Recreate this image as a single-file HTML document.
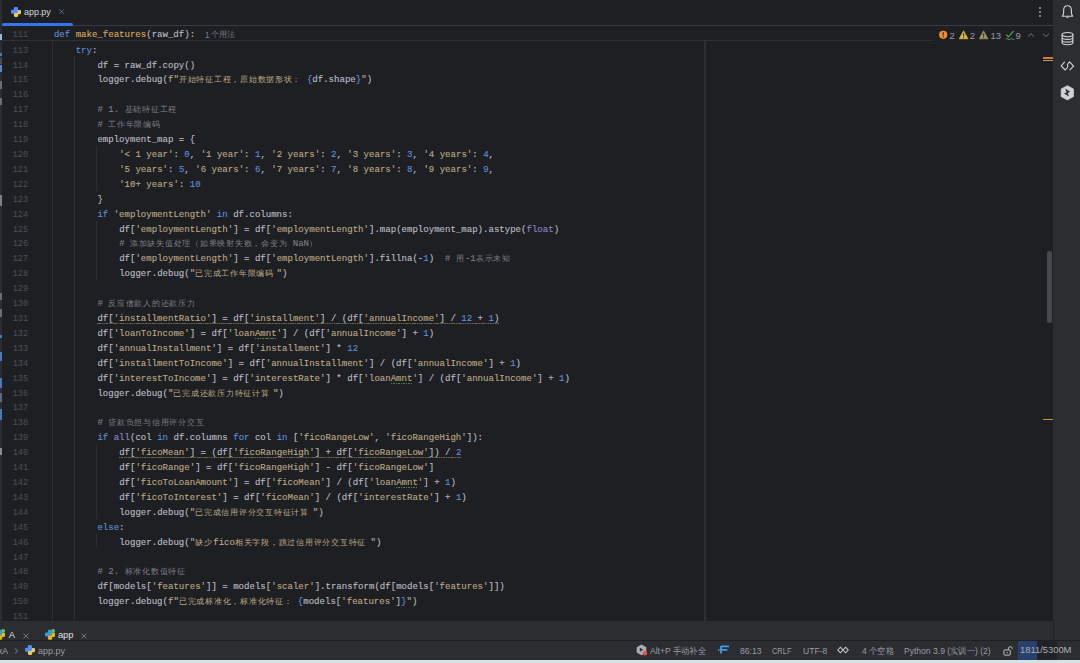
<!DOCTYPE html>
<html><head><meta charset="utf-8">
<style>
*{box-sizing:border-box}
html,body{margin:0;padding:0}
body{width:1080px;height:663px;overflow:hidden;position:relative;background:#1e1f22;font-family:"Liberation Sans",sans-serif}
.abs{position:absolute}
.ln{position:absolute;left:0;width:28.2px;text-align:right;font-family:"Liberation Mono",monospace;font-size:8.6px;line-height:14.91px;height:14.91px;color:#4b5059;white-space:pre}
.cl{position:absolute;left:53.9px;font-family:"Liberation Mono",monospace;font-size:9.05px;line-height:14.91px;height:14.91px;white-space:pre;color:#bcbec4;-webkit-text-stroke:0.12px currentColor}
.zh{-webkit-text-stroke:0;display:inline-block;vertical-align:baseline;white-space:nowrap;font-size:8.3px;letter-spacing:0.74px;font-family:"Liberation Serif",serif}
.d{color:#bcbec4}.k{color:#5f8ed8}.f{color:#dda85e}.s{color:#bba98a}.n{color:#5f8ed8}.c{color:#7a7e85}.b{color:#8a88c8}.br{color:#5f8ed8}
.hint{position:absolute;font-family:"Liberation Sans",sans-serif;font-size:8px;line-height:14.91px;color:#757880;white-space:nowrap}
.wav{position:absolute;height:1.3px;background:repeating-linear-gradient(90deg,#66634e 0 1.5px,#3a3930 1.5px 2.3px)}
.typo{position:absolute;height:1.4px;background:repeating-linear-gradient(90deg,#4f7d50 0 1.5px,transparent 1.5px 2.5px)}
.guide{position:absolute;width:1.2px;background:#2c2e32}
.wtxt{top:29.8px;font-size:9.5px;line-height:12px;color:#979ca4;font-family:"Liberation Sans",sans-serif}
.tabt{top:629px;font-size:9.3px;line-height:12px;color:#dfe1e5}
.stt{top:644.5px;font-size:9.3px;line-height:12px;color:#9a9da4;white-space:nowrap;transform-origin:0 50%;transform:scaleX(0.92)}
</style></head><body>
<!-- left strip -->
<div class="abs" style="left:0;top:0;width:2px;height:641px;background:#2b2d30"></div>
<!-- tab bar -->
<div class="abs" style="left:2px;top:25px;width:1051px;height:1px;background:#393b40"></div>
<div class="abs" style="left:2px;top:23px;width:70.5px;height:3px;border-radius:1.5px;background:#3574f0"></div>
<svg class="abs" style="left:10.9px;top:6.9px" width="10.2" height="10" viewBox="0 0 10.2 10">
<rect x="3.1" y="2.9" width="7" height="4.3" rx="1.3" fill="#f0c75a"/>
<rect x="2.9" y="5.6" width="4.3" height="4.3" rx="1.3" fill="#f0c75a"/>
<rect x="2.9" y="0" width="4.1" height="4.3" rx="1.3" fill="#4f8ef7"/>
<rect x="0" y="2.7" width="6.8" height="3.4" rx="1.2" fill="#4f8ef7"/>
<rect x="0" y="4.5" width="3.4" height="2.3" rx="1.1" fill="#4f8ef7"/>
</svg>
<div class="abs" style="left:24.4px;top:6px;font-size:9.6px;line-height:12px;color:#d5d7dc;transform-origin:0 50%;transform:scaleX(0.93)">app.py</div>
<svg class="abs" style="left:59.3px;top:9.2px" width="5.2" height="5.2" viewBox="0 0 6 6"><path d="M0.5 0.5L5.5 5.5M5.5 0.5L0.5 5.5" stroke="#80848b" stroke-width="0.9"/></svg>
<!-- kebab -->
<div class="abs" style="left:1039px;top:7px;width:2px;height:2px;border-radius:1px;background:#9da0a8"></div>
<div class="abs" style="left:1039px;top:11px;width:2px;height:2px;border-radius:1px;background:#9da0a8"></div>
<div class="abs" style="left:1039px;top:15px;width:2px;height:2px;border-radius:1px;background:#9da0a8"></div>

<!-- sticky header separator -->
<div class="abs" style="left:2px;top:40px;width:931px;height:1px;background:#2e3035"></div>

<!-- indent guides -->
<div class="guide" style="left:51.6px;top:41px;height:580px"></div>
<div class="guide" style="left:74.3px;top:56px;height:565px"></div>
<div class="guide" style="left:96.1px;top:146.0px;height:44.7px"></div>
<div class="guide" style="left:96.1px;top:220.5px;height:59.6px"></div>
<div class="guide" style="left:96.1px;top:444.2px;height:74.5px"></div>
<div class="guide" style="left:96.1px;top:533.6px;height:14.9px"></div>

<!-- right margin -->
<div class="abs" style="left:704.4px;top:41px;width:1.2px;height:580px;background:#2d2f33"></div>

<div class="ln" style="top:27.93px">111</div><div class="cl" style="top:27.93px"><span class="k">def</span><span class="d"> </span><span class="f">make_features</span><span class="d">(raw_df):</span></div><div class="hint" style="left:204.8px;top:27.73px;font-size:9.2px">1</div><div class="hint" style="left:211.3px;top:28.33px">个用法</div>
<div class="ln" style="top:43.63px">113</div>
<div class="cl" style="top:43.63px"><span class="d"> </span><span class="d"> </span><span class="d"> </span><span class="d"> </span><span class="k">try</span><span class="d">:</span></div>
<div class="ln" style="top:58.54px">114</div>
<div class="cl" style="top:58.54px"><span class="d"> </span><span class="d"> </span><span class="d"> </span><span class="d"> </span><span class="d"> </span><span class="d"> </span><span class="d"> </span><span class="d"> </span><span class="d">df</span><span class="d"> </span><span class="d">=</span><span class="d"> </span><span class="d">raw_df</span><span class="d">.</span><span class="d">copy</span><span class="d">(</span><span class="d">)</span></div>
<div class="ln" style="top:73.45px">115</div>
<div class="cl" style="top:73.45px"><span class="d"> </span><span class="d"> </span><span class="d"> </span><span class="d"> </span><span class="d"> </span><span class="d"> </span><span class="d"> </span><span class="d"> </span><span class="d">logger</span><span class="d">.</span><span class="d">debug</span><span class="d">(</span><span class="s">f&quot;</span><span class="s"><span class="zh" style="width:128.02px">开始特征工程，原始数据形状：</span></span><span class="br">{</span><span class="d">df</span><span class="d">.</span><span class="d">shape</span><span class="br">}</span><span class="s">&quot;</span><span class="d">)</span></div>
<div class="ln" style="top:88.36px">116</div>
<div class="ln" style="top:103.27px">117</div>
<div class="cl" style="top:103.27px"><span class="d"> </span><span class="d"> </span><span class="d"> </span><span class="d"> </span><span class="d"> </span><span class="d"> </span><span class="d"> </span><span class="d"> </span><span class="c"># 1. <span class="zh" style="width:54.24px">基础特征工程</span></span></div>
<div class="ln" style="top:118.18px">118</div>
<div class="cl" style="top:118.18px"><span class="d"> </span><span class="d"> </span><span class="d"> </span><span class="d"> </span><span class="d"> </span><span class="d"> </span><span class="d"> </span><span class="d"> </span><span class="c"># <span class="zh" style="width:54.24px">工作年限编码</span></span></div>
<div class="ln" style="top:133.09px">119</div>
<div class="cl" style="top:133.09px"><span class="d"> </span><span class="d"> </span><span class="d"> </span><span class="d"> </span><span class="d"> </span><span class="d"> </span><span class="d"> </span><span class="d"> </span><span class="d">employment_map</span><span class="d"> </span><span class="d">=</span><span class="d"> </span><span class="d">{</span></div>
<div class="ln" style="top:148.00px">120</div>
<div class="cl" style="top:148.00px"><span class="d"> </span><span class="d"> </span><span class="d"> </span><span class="d"> </span><span class="d"> </span><span class="d"> </span><span class="d"> </span><span class="d"> </span><span class="d"> </span><span class="d"> </span><span class="d"> </span><span class="d"> </span><span class="s">&#x27;&lt; 1 year&#x27;</span><span class="d">:</span><span class="d"> </span><span class="n">0</span><span class="d">,</span><span class="d"> </span><span class="s">&#x27;1 year&#x27;</span><span class="d">:</span><span class="d"> </span><span class="n">1</span><span class="d">,</span><span class="d"> </span><span class="s">&#x27;2 years&#x27;</span><span class="d">:</span><span class="d"> </span><span class="n">2</span><span class="d">,</span><span class="d"> </span><span class="s">&#x27;3 years&#x27;</span><span class="d">:</span><span class="d"> </span><span class="n">3</span><span class="d">,</span><span class="d"> </span><span class="s">&#x27;4 years&#x27;</span><span class="d">:</span><span class="d"> </span><span class="n">4</span><span class="d">,</span></div>
<div class="ln" style="top:162.91px">121</div>
<div class="cl" style="top:162.91px"><span class="d"> </span><span class="d"> </span><span class="d"> </span><span class="d"> </span><span class="d"> </span><span class="d"> </span><span class="d"> </span><span class="d"> </span><span class="d"> </span><span class="d"> </span><span class="d"> </span><span class="d"> </span><span class="s">&#x27;5 years&#x27;</span><span class="d">:</span><span class="d"> </span><span class="n">5</span><span class="d">,</span><span class="d"> </span><span class="s">&#x27;6 years&#x27;</span><span class="d">:</span><span class="d"> </span><span class="n">6</span><span class="d">,</span><span class="d"> </span><span class="s">&#x27;7 years&#x27;</span><span class="d">:</span><span class="d"> </span><span class="n">7</span><span class="d">,</span><span class="d"> </span><span class="s">&#x27;8 years&#x27;</span><span class="d">:</span><span class="d"> </span><span class="n">8</span><span class="d">,</span><span class="d"> </span><span class="s">&#x27;9 years&#x27;</span><span class="d">:</span><span class="d"> </span><span class="n">9</span><span class="d">,</span></div>
<div class="ln" style="top:177.82px">122</div>
<div class="cl" style="top:177.82px"><span class="d"> </span><span class="d"> </span><span class="d"> </span><span class="d"> </span><span class="d"> </span><span class="d"> </span><span class="d"> </span><span class="d"> </span><span class="d"> </span><span class="d"> </span><span class="d"> </span><span class="d"> </span><span class="s">&#x27;10+ years&#x27;</span><span class="d">:</span><span class="d"> </span><span class="n">10</span></div>
<div class="ln" style="top:192.73px">123</div>
<div class="cl" style="top:192.73px"><span class="d"> </span><span class="d"> </span><span class="d"> </span><span class="d"> </span><span class="d"> </span><span class="d"> </span><span class="d"> </span><span class="d"> </span><span class="d">}</span></div>
<div class="ln" style="top:207.64px">124</div>
<div class="cl" style="top:207.64px"><span class="d"> </span><span class="d"> </span><span class="d"> </span><span class="d"> </span><span class="d"> </span><span class="d"> </span><span class="d"> </span><span class="d"> </span><span class="k">if</span><span class="d"> </span><span class="s">&#x27;employmentLength&#x27;</span><span class="d"> </span><span class="k">in</span><span class="d"> </span><span class="d">df</span><span class="d">.</span><span class="d">columns</span><span class="d">:</span></div>
<div class="ln" style="top:222.55px">125</div>
<div class="cl" style="top:222.55px"><span class="d"> </span><span class="d"> </span><span class="d"> </span><span class="d"> </span><span class="d"> </span><span class="d"> </span><span class="d"> </span><span class="d"> </span><span class="d"> </span><span class="d"> </span><span class="d"> </span><span class="d"> </span><span class="d">df</span><span class="d">[</span><span class="s">&#x27;employmentLength&#x27;</span><span class="d">]</span><span class="d"> </span><span class="d">=</span><span class="d"> </span><span class="d">df</span><span class="d">[</span><span class="s">&#x27;employmentLength&#x27;</span><span class="d">]</span><span class="d">.</span><span class="d">map</span><span class="d">(</span><span class="d">employment_map</span><span class="d">)</span><span class="d">.</span><span class="d">astype</span><span class="d">(</span><span class="b">float</span><span class="d">)</span></div>
<div class="ln" style="top:237.46px">126</div>
<div class="cl" style="top:237.46px"><span class="d"> </span><span class="d"> </span><span class="d"> </span><span class="d"> </span><span class="d"> </span><span class="d"> </span><span class="d"> </span><span class="d"> </span><span class="d"> </span><span class="d"> </span><span class="d"> </span><span class="d"> </span><span class="c"># <span class="zh" style="width:162.72px">添加缺失值处理（如果映射失败，会变为</span>NaN<span class="zh" style="width:9.04px">）</span></span></div>
<div class="ln" style="top:252.37px">127</div>
<div class="cl" style="top:252.37px"><span class="d"> </span><span class="d"> </span><span class="d"> </span><span class="d"> </span><span class="d"> </span><span class="d"> </span><span class="d"> </span><span class="d"> </span><span class="d"> </span><span class="d"> </span><span class="d"> </span><span class="d"> </span><span class="d">df</span><span class="d">[</span><span class="s">&#x27;employmentLength&#x27;</span><span class="d">]</span><span class="d"> </span><span class="d">=</span><span class="d"> </span><span class="d">df</span><span class="d">[</span><span class="s">&#x27;employmentLength&#x27;</span><span class="d">]</span><span class="d">.</span><span class="d">fillna</span><span class="d">(</span><span class="d">-</span><span class="n">1</span><span class="d">)</span><span class="d"> </span><span class="d"> </span><span class="c"># <span class="zh" style="width:9.04px">用</span>-1<span class="zh" style="width:36.16px">表示未知</span></span></div>
<div class="ln" style="top:267.28px">128</div>
<div class="cl" style="top:267.28px"><span class="d"> </span><span class="d"> </span><span class="d"> </span><span class="d"> </span><span class="d"> </span><span class="d"> </span><span class="d"> </span><span class="d"> </span><span class="d"> </span><span class="d"> </span><span class="d"> </span><span class="d"> </span><span class="d">logger</span><span class="d">.</span><span class="d">debug</span><span class="d">(</span><span class="s">&quot;<span class="zh" style="width:81.36px">已完成工作年限编码</span>&quot;</span><span class="d">)</span></div>
<div class="ln" style="top:282.19px">129</div>
<div class="ln" style="top:297.10px">130</div>
<div class="cl" style="top:297.10px"><span class="d"> </span><span class="d"> </span><span class="d"> </span><span class="d"> </span><span class="d"> </span><span class="d"> </span><span class="d"> </span><span class="d"> </span><span class="c"># <span class="zh" style="width:90.40px">反应借款人的还款压力</span></span></div>
<div class="ln" style="top:312.01px">131</div>
<div class="cl" style="top:312.01px"><span class="d"> </span><span class="d"> </span><span class="d"> </span><span class="d"> </span><span class="d"> </span><span class="d"> </span><span class="d"> </span><span class="d"> </span><span class="d">df</span><span class="d">[</span><span class="s">&#x27;installmentRatio&#x27;</span><span class="d">]</span><span class="d"> </span><span class="d">=</span><span class="d"> </span><span class="d">df</span><span class="d">[</span><span class="s">&#x27;installment&#x27;</span><span class="d">]</span><span class="d"> </span><span class="d">/</span><span class="d"> </span><span class="d">(</span><span class="d">df</span><span class="d">[</span><span class="s">&#x27;annualIncome&#x27;</span><span class="d">]</span><span class="d"> </span><span class="d">/</span><span class="d"> </span><span class="n">12</span><span class="d"> </span><span class="d">+</span><span class="d"> </span><span class="n">1</span><span class="d">)</span></div>
<div class="ln" style="top:326.92px">132</div>
<div class="cl" style="top:326.92px"><span class="d"> </span><span class="d"> </span><span class="d"> </span><span class="d"> </span><span class="d"> </span><span class="d"> </span><span class="d"> </span><span class="d"> </span><span class="d">df</span><span class="d">[</span><span class="s">&#x27;loanToIncome&#x27;</span><span class="d">]</span><span class="d"> </span><span class="d">=</span><span class="d"> </span><span class="d">df</span><span class="d">[</span><span class="s">&#x27;loanAmnt&#x27;</span><span class="d">]</span><span class="d"> </span><span class="d">/</span><span class="d"> </span><span class="d">(</span><span class="d">df</span><span class="d">[</span><span class="s">&#x27;annualIncome&#x27;</span><span class="d">]</span><span class="d"> </span><span class="d">+</span><span class="d"> </span><span class="n">1</span><span class="d">)</span></div>
<div class="ln" style="top:341.83px">133</div>
<div class="cl" style="top:341.83px"><span class="d"> </span><span class="d"> </span><span class="d"> </span><span class="d"> </span><span class="d"> </span><span class="d"> </span><span class="d"> </span><span class="d"> </span><span class="d">df</span><span class="d">[</span><span class="s">&#x27;annualInstallment&#x27;</span><span class="d">]</span><span class="d"> </span><span class="d">=</span><span class="d"> </span><span class="d">df</span><span class="d">[</span><span class="s">&#x27;installment&#x27;</span><span class="d">]</span><span class="d"> </span><span class="d">*</span><span class="d"> </span><span class="n">12</span></div>
<div class="ln" style="top:356.74px">134</div>
<div class="cl" style="top:356.74px"><span class="d"> </span><span class="d"> </span><span class="d"> </span><span class="d"> </span><span class="d"> </span><span class="d"> </span><span class="d"> </span><span class="d"> </span><span class="d">df</span><span class="d">[</span><span class="s">&#x27;installmentToIncome&#x27;</span><span class="d">]</span><span class="d"> </span><span class="d">=</span><span class="d"> </span><span class="d">df</span><span class="d">[</span><span class="s">&#x27;annualInstallment&#x27;</span><span class="d">]</span><span class="d"> </span><span class="d">/</span><span class="d"> </span><span class="d">(</span><span class="d">df</span><span class="d">[</span><span class="s">&#x27;annualIncome&#x27;</span><span class="d">]</span><span class="d"> </span><span class="d">+</span><span class="d"> </span><span class="n">1</span><span class="d">)</span></div>
<div class="ln" style="top:371.65px">135</div>
<div class="cl" style="top:371.65px"><span class="d"> </span><span class="d"> </span><span class="d"> </span><span class="d"> </span><span class="d"> </span><span class="d"> </span><span class="d"> </span><span class="d"> </span><span class="d">df</span><span class="d">[</span><span class="s">&#x27;interestToIncome&#x27;</span><span class="d">]</span><span class="d"> </span><span class="d">=</span><span class="d"> </span><span class="d">df</span><span class="d">[</span><span class="s">&#x27;interestRate&#x27;</span><span class="d">]</span><span class="d"> </span><span class="d">*</span><span class="d"> </span><span class="d">df</span><span class="d">[</span><span class="s">&#x27;loanAmnt&#x27;</span><span class="d">]</span><span class="d"> </span><span class="d">/</span><span class="d"> </span><span class="d">(</span><span class="d">df</span><span class="d">[</span><span class="s">&#x27;annualIncome&#x27;</span><span class="d">]</span><span class="d"> </span><span class="d">+</span><span class="d"> </span><span class="n">1</span><span class="d">)</span></div>
<div class="ln" style="top:386.56px">136</div>
<div class="cl" style="top:386.56px"><span class="d"> </span><span class="d"> </span><span class="d"> </span><span class="d"> </span><span class="d"> </span><span class="d"> </span><span class="d"> </span><span class="d"> </span><span class="d">logger</span><span class="d">.</span><span class="d">debug</span><span class="d">(</span><span class="s">&quot;<span class="zh" style="width:99.44px">已完成还款压力特征计算</span>&quot;</span><span class="d">)</span></div>
<div class="ln" style="top:401.47px">137</div>
<div class="ln" style="top:416.38px">138</div>
<div class="cl" style="top:416.38px"><span class="d"> </span><span class="d"> </span><span class="d"> </span><span class="d"> </span><span class="d"> </span><span class="d"> </span><span class="d"> </span><span class="d"> </span><span class="c"># <span class="zh" style="width:99.44px">贷款负担与信用评分交互</span></span></div>
<div class="ln" style="top:431.29px">139</div>
<div class="cl" style="top:431.29px"><span class="d"> </span><span class="d"> </span><span class="d"> </span><span class="d"> </span><span class="d"> </span><span class="d"> </span><span class="d"> </span><span class="d"> </span><span class="k">if</span><span class="d"> </span><span class="b">all</span><span class="d">(</span><span class="d">col</span><span class="d"> </span><span class="k">in</span><span class="d"> </span><span class="d">df</span><span class="d">.</span><span class="d">columns</span><span class="d"> </span><span class="k">for</span><span class="d"> </span><span class="d">col</span><span class="d"> </span><span class="k">in</span><span class="d"> </span><span class="d">[</span><span class="s">&#x27;ficoRangeLow&#x27;</span><span class="d">,</span><span class="d"> </span><span class="s">&#x27;ficoRangeHigh&#x27;</span><span class="d">]</span><span class="d">)</span><span class="d">:</span></div>
<div class="ln" style="top:446.20px">140</div>
<div class="cl" style="top:446.20px"><span class="d"> </span><span class="d"> </span><span class="d"> </span><span class="d"> </span><span class="d"> </span><span class="d"> </span><span class="d"> </span><span class="d"> </span><span class="d"> </span><span class="d"> </span><span class="d"> </span><span class="d"> </span><span class="d">df</span><span class="d">[</span><span class="s">&#x27;ficoMean&#x27;</span><span class="d">]</span><span class="d"> </span><span class="d">=</span><span class="d"> </span><span class="d">(</span><span class="d">df</span><span class="d">[</span><span class="s">&#x27;ficoRangeHigh&#x27;</span><span class="d">]</span><span class="d"> </span><span class="d">+</span><span class="d"> </span><span class="d">df</span><span class="d">[</span><span class="s">&#x27;ficoRangeLow&#x27;</span><span class="d">]</span><span class="d">)</span><span class="d"> </span><span class="d">/</span><span class="d"> </span><span class="n">2</span></div>
<div class="ln" style="top:461.11px">141</div>
<div class="cl" style="top:461.11px"><span class="d"> </span><span class="d"> </span><span class="d"> </span><span class="d"> </span><span class="d"> </span><span class="d"> </span><span class="d"> </span><span class="d"> </span><span class="d"> </span><span class="d"> </span><span class="d"> </span><span class="d"> </span><span class="d">df</span><span class="d">[</span><span class="s">&#x27;ficoRange&#x27;</span><span class="d">]</span><span class="d"> </span><span class="d">=</span><span class="d"> </span><span class="d">df</span><span class="d">[</span><span class="s">&#x27;ficoRangeHigh&#x27;</span><span class="d">]</span><span class="d"> </span><span class="d">-</span><span class="d"> </span><span class="d">df</span><span class="d">[</span><span class="s">&#x27;ficoRangeLow&#x27;</span><span class="d">]</span></div>
<div class="ln" style="top:476.02px">142</div>
<div class="cl" style="top:476.02px"><span class="d"> </span><span class="d"> </span><span class="d"> </span><span class="d"> </span><span class="d"> </span><span class="d"> </span><span class="d"> </span><span class="d"> </span><span class="d"> </span><span class="d"> </span><span class="d"> </span><span class="d"> </span><span class="d">df</span><span class="d">[</span><span class="s">&#x27;ficoToLoanAmount&#x27;</span><span class="d">]</span><span class="d"> </span><span class="d">=</span><span class="d"> </span><span class="d">df</span><span class="d">[</span><span class="s">&#x27;ficoMean&#x27;</span><span class="d">]</span><span class="d"> </span><span class="d">/</span><span class="d"> </span><span class="d">(</span><span class="d">df</span><span class="d">[</span><span class="s">&#x27;loanAmnt&#x27;</span><span class="d">]</span><span class="d"> </span><span class="d">+</span><span class="d"> </span><span class="n">1</span><span class="d">)</span></div>
<div class="ln" style="top:490.93px">143</div>
<div class="cl" style="top:490.93px"><span class="d"> </span><span class="d"> </span><span class="d"> </span><span class="d"> </span><span class="d"> </span><span class="d"> </span><span class="d"> </span><span class="d"> </span><span class="d"> </span><span class="d"> </span><span class="d"> </span><span class="d"> </span><span class="d">df</span><span class="d">[</span><span class="s">&#x27;ficoToInterest&#x27;</span><span class="d">]</span><span class="d"> </span><span class="d">=</span><span class="d"> </span><span class="d">df</span><span class="d">[</span><span class="s">&#x27;ficoMean&#x27;</span><span class="d">]</span><span class="d"> </span><span class="d">/</span><span class="d"> </span><span class="d">(</span><span class="d">df</span><span class="d">[</span><span class="s">&#x27;interestRate&#x27;</span><span class="d">]</span><span class="d"> </span><span class="d">+</span><span class="d"> </span><span class="n">1</span><span class="d">)</span></div>
<div class="ln" style="top:505.84px">144</div>
<div class="cl" style="top:505.84px"><span class="d"> </span><span class="d"> </span><span class="d"> </span><span class="d"> </span><span class="d"> </span><span class="d"> </span><span class="d"> </span><span class="d"> </span><span class="d"> </span><span class="d"> </span><span class="d"> </span><span class="d"> </span><span class="d">logger</span><span class="d">.</span><span class="d">debug</span><span class="d">(</span><span class="s">&quot;<span class="zh" style="width:117.52px">已完成信用评分交互特征计算</span>&quot;</span><span class="d">)</span></div>
<div class="ln" style="top:520.75px">145</div>
<div class="cl" style="top:520.75px"><span class="d"> </span><span class="d"> </span><span class="d"> </span><span class="d"> </span><span class="d"> </span><span class="d"> </span><span class="d"> </span><span class="d"> </span><span class="k">else</span><span class="d">:</span></div>
<div class="ln" style="top:535.66px">146</div>
<div class="cl" style="top:535.66px"><span class="d"> </span><span class="d"> </span><span class="d"> </span><span class="d"> </span><span class="d"> </span><span class="d"> </span><span class="d"> </span><span class="d"> </span><span class="d"> </span><span class="d"> </span><span class="d"> </span><span class="d"> </span><span class="d">logger</span><span class="d">.</span><span class="d">debug</span><span class="d">(</span><span class="s">&quot;<span class="zh" style="width:18.08px">缺少</span>fico<span class="zh" style="width:135.60px">相关字段，跳过信用评分交互特征</span>&quot;</span><span class="d">)</span></div>
<div class="ln" style="top:550.57px">147</div>
<div class="ln" style="top:565.48px">148</div>
<div class="cl" style="top:565.48px"><span class="d"> </span><span class="d"> </span><span class="d"> </span><span class="d"> </span><span class="d"> </span><span class="d"> </span><span class="d"> </span><span class="d"> </span><span class="c"># 2. <span class="zh" style="width:63.28px">标准化数值特征</span></span></div>
<div class="ln" style="top:580.39px">149</div>
<div class="cl" style="top:580.39px"><span class="d"> </span><span class="d"> </span><span class="d"> </span><span class="d"> </span><span class="d"> </span><span class="d"> </span><span class="d"> </span><span class="d"> </span><span class="d">df</span><span class="d">[</span><span class="d">models</span><span class="d">[</span><span class="s">&#x27;features&#x27;</span><span class="d">]</span><span class="d">]</span><span class="d"> </span><span class="d">=</span><span class="d"> </span><span class="d">models</span><span class="d">[</span><span class="s">&#x27;scaler&#x27;</span><span class="d">]</span><span class="d">.</span><span class="d">transform</span><span class="d">(</span><span class="d">df</span><span class="d">[</span><span class="d">models</span><span class="d">[</span><span class="s">&#x27;features&#x27;</span><span class="d">]</span><span class="d">]</span><span class="d">)</span></div>
<div class="ln" style="top:595.30px">150</div>
<div class="cl" style="top:595.30px"><span class="d"> </span><span class="d"> </span><span class="d"> </span><span class="d"> </span><span class="d"> </span><span class="d"> </span><span class="d"> </span><span class="d"> </span><span class="d">logger</span><span class="d">.</span><span class="d">debug</span><span class="d">(</span><span class="s">f&quot;</span><span class="s"><span class="zh" style="width:118.98px">已完成标准化，标准化特征：</span></span><span class="br">{</span><span class="d">models</span><span class="d">[</span><span class="s">&#x27;features&#x27;</span><span class="d">]</span><span class="br">}</span><span class="s">&quot;</span><span class="d">)</span></div>
<div class="ln" style="top:610.21px">151</div>
<div class="wav" style="left:97.3px;top:323.0px;width:401.8px"></div>
<div class="wav" style="left:119.1px;top:457.2px;width:342.1px"></div>
<div class="typo" style="left:254.8px;top:337.8px;width:21.7px"></div>
<div class="typo" style="left:390.6px;top:382.5px;width:21.7px"></div>
<div class="typo" style="left:396.0px;top:486.9px;width:21.7px"></div>

<!-- right stripe -->
<div class="abs" style="left:1053px;top:0;width:27px;height:641px;background:#2b2d30"></div>

<!-- scrollbar -->
<div class="abs" style="left:1047px;top:251px;width:5px;height:72px;border-radius:2px;background:#46484d"></div>

<!-- bottom tool tabs -->
<div class="abs" style="left:0;top:620.5px;width:1080px;height:20px;background:#2b2d30"></div>
<div class="abs" style="left:1052.5px;top:620.5px;width:0.8px;height:20px;background:#232427"></div>
<!-- status bar -->
<div class="abs" style="left:0;top:640px;width:1080px;height:1px;background:#1e1f22"></div>
<div class="abs" style="left:0;top:641px;width:1080px;height:19px;background:#2b2d30"></div>
<div class="abs" style="left:0;top:660px;width:1080px;height:3px;background:#d3e3e4"></div>

<!-- left strip marks -->
<div class="abs" style="left:0;top:33.6px;width:2px;height:6.8px;background:#9fb8d6"></div>
<div class="abs" style="left:0;top:52.5px;width:2px;height:3.5px;background:#4d78b8"></div>
<div class="abs" style="left:0;top:58px;width:2px;height:5.5px;background:#4a4c52"></div>
<div class="abs" style="left:0;top:65px;width:2px;height:6.5px;background:#5f86c2"></div>
<div class="abs" style="left:0;top:81px;width:2px;height:7.5px;background:#6b6e74"></div>
<div class="abs" style="left:0;top:97.7px;width:2px;height:7.5px;background:#6b6e74"></div>
<div class="abs" style="left:0;top:195.4px;width:2px;height:11px;background:#7d8086"></div>
<div class="abs" style="left:0;top:293px;width:2px;height:7px;background:#6b6e74"></div>
<div class="abs" style="left:0;top:309px;width:2px;height:8px;background:#6b6e74"></div>
<div class="abs" style="left:0;top:335px;width:2px;height:3px;background:#4d78b8"></div>
<div class="abs" style="left:0;top:352px;width:2px;height:9px;background:#4d78b8"></div>
<div class="abs" style="left:0;top:378px;width:2px;height:10px;background:#4d78b8"></div>
<div class="abs" style="left:0;top:393px;width:2px;height:9px;background:#5c6a7e"></div>
<div class="abs" style="left:0;top:409px;width:2px;height:11px;background:#4d78b8"></div>
<div class="abs" style="left:0;top:448px;width:2px;height:7px;background:#8a8d92"></div>

<!-- inspection widget -->
<svg class="abs" style="left:938px;top:30px" width="12" height="10" viewBox="0 0 12 10">
<circle cx="5.2" cy="4.8" r="4.1" fill="#f28c35"/><rect x="4.6" y="2.2" width="1.2" height="3.3" fill="#3a2a1a"/><rect x="4.6" y="6.3" width="1.2" height="1.2" fill="#3a2a1a"/>
</svg>
<div class="abs wtxt" style="left:949.5px">2</div>
<svg class="abs" style="left:958.5px;top:30px" width="10" height="10" viewBox="0 0 10 10">
<path d="M4.6 0.8L9 8.8H0.2Z" fill="#e0b84a" stroke="#e0b84a" stroke-width="0.6" stroke-linejoin="round"/><rect x="4.05" y="3.3" width="1.1" height="3" fill="#3a2e14"/><rect x="4.05" y="6.9" width="1.1" height="1" fill="#3a2e14"/>
</svg>
<div class="abs wtxt" style="left:969.8px">2</div>
<svg class="abs" style="left:979.2px;top:30px" width="10" height="10" viewBox="0 0 10 10">
<path d="M4.6 0.8L9 8.8H0.2Z" fill="#9b9768" stroke="#9b9768" stroke-width="0.6" stroke-linejoin="round"/><rect x="4.05" y="3.3" width="1.1" height="3" fill="#2f2e22"/><rect x="4.05" y="6.9" width="1.1" height="1" fill="#2f2e22"/>
</svg>
<div class="abs wtxt" style="left:990.5px">13</div>
<svg class="abs" style="left:1004.5px;top:30px" width="10" height="10" viewBox="0 0 10 10">
<path d="M1 4.6L3.5 6.8L8.6 1" fill="none" stroke="#5fb865" stroke-width="1.1"/><path d="M0.8 9.1q1.1-1.2 2.2 0t2.2 0t2.2 0t2.2 0" fill="none" stroke="#5fb865" stroke-width="0.8"/>
</svg>
<div class="abs wtxt" style="left:1015.4px">9</div>
<svg class="abs" style="left:1027px;top:32px" width="8" height="6" viewBox="0 0 8 6"><path d="M1 4.5L4 1.8L7 4.5" fill="none" stroke="#7e8189" stroke-width="0.9"/></svg>
<svg class="abs" style="left:1041.5px;top:32px" width="8" height="6" viewBox="0 0 8 6"><path d="M1 1.8L4 4.5L7 1.8" fill="none" stroke="#7e8189" stroke-width="0.9"/></svg>

<!-- error stripe marks -->
<div class="abs" style="left:1043.2px;top:57.3px;width:9.8px;height:1.9px;background:#d27b3b"></div>
<div class="abs" style="left:1043.2px;top:59.5px;width:9.8px;height:1.6px;background:#b99b4b"></div>
<div class="abs" style="left:1043.2px;top:418.8px;width:9.8px;height:1.6px;background:#b89a4a"></div>

<!-- right stripe icons -->
<svg class="abs" style="left:1060px;top:4px" width="15" height="15" viewBox="0 0 15 15">
<path d="M2.3 12.2H12.7Q11.4 10.8 11.4 8.8V6.4Q11.4 1.7 7.5 1.7Q3.6 1.7 3.6 6.4V8.8Q3.6 10.8 2.3 12.2Z" fill="none" stroke="#cfd1d6" stroke-width="1.15" stroke-linejoin="round"/>
<path d="M6.6 13.6H8.4" stroke="#cfd1d6" stroke-width="1"/>
</svg>
<svg class="abs" style="left:1060px;top:31px" width="15" height="15" viewBox="0 0 15 15">
<ellipse cx="7.5" cy="3.6" rx="5.4" ry="2.1" fill="none" stroke="#cfd1d6" stroke-width="1.15"/>
<path d="M2.1 3.6V11.6Q2.1 13.7 7.5 13.7Q12.9 13.7 12.9 11.6V3.6M2.1 6.3Q2.1 8.4 7.5 8.4Q12.9 8.4 12.9 6.3M2.1 9Q2.1 11.1 7.5 11.1Q12.9 11.1 12.9 9" fill="none" stroke="#cfd1d6" stroke-width="1.15"/>
</svg>
<svg class="abs" style="left:1060px;top:58px" width="15" height="15" viewBox="0 0 15 15">
<path d="M4.5 4.1L1.2 7.8L5.2 12L7.5 9.3Q8.1 8 7.4 6.5L9.6 3.9L13.6 8.1L9.8 11.9" fill="none" stroke="#cfd1d6" stroke-width="1.15" stroke-linejoin="round" stroke-linecap="round"/>
</svg>
<svg class="abs" style="left:1060px;top:85px" width="15" height="16" viewBox="0 0 15 16">
<path d="M7.35 0.7L13.4 4V11.6L7.35 14.9L1.2 11.6V4Z" fill="#cfd1d6" stroke="#cfd1d6" stroke-width="0.8" stroke-linejoin="round"/>
<path d="M5.2 3.4L10.2 6.8L7.8 7.9L9 11.6L4 8.4L6.6 7.2Z" fill="#2b2d30"/>
</svg>

<!-- bottom tool tabs -->
<svg class="abs" style="left:-5.2px;top:629px" width="10.2" height="10.7" viewBox="0 0 10.2 10.7"><rect x="3.1" y="3.6" width="7" height="4.3" rx="1.3" fill="#e8b80c"/><rect x="2.9" y="6.4" width="4.3" height="4.3" rx="1.3" fill="#e8b80c"/><rect x="2.9" y="0.7" width="4.1" height="4.3" rx="1.3" fill="#3a9ad6"/><rect x="0" y="3.4" width="6.8" height="3.4" rx="1.2" fill="#3a9ad6"/><rect x="0" y="5.2" width="3.4" height="2.3" rx="1.1" fill="#3a9ad6"/><circle cx="8.25" cy="1.9" r="1.9" fill="#5fb865"/></svg>
<div class="abs tabt" style="left:8.8px">A</div>
<svg class="abs" style="left:22.5px;top:632.5px" width="6" height="6" viewBox="0 0 6 6"><path d="M0.5 0.5L5.5 5.5M5.5 0.5L0.5 5.5" stroke="#7a7e85" stroke-width="0.9"/></svg>
<svg class="abs" style="left:25px;top:644.8px" width="10.2" height="10" viewBox="0 0 10.2 10"><rect x="3.1" y="2.9" width="7" height="4.3" rx="1.3" fill="#f0c75a"/><rect x="2.9" y="5.6" width="4.3" height="4.3" rx="1.3" fill="#f0c75a"/><rect x="2.9" y="0" width="4.1" height="4.3" rx="1.3" fill="#4f8ef7"/><rect x="0" y="2.7" width="6.8" height="3.4" rx="1.2" fill="#4f8ef7"/><rect x="0" y="4.5" width="3.4" height="2.3" rx="1.1" fill="#4f8ef7"/></svg>
<div class="abs tabt" style="left:57.9px">app</div>
<svg class="abs" style="left:81px;top:632.5px" width="6" height="6" viewBox="0 0 6 6"><path d="M0.5 0.5L5.5 5.5M5.5 0.5L0.5 5.5" stroke="#7a7e85" stroke-width="0.9"/></svg>

<!-- status bar -->
<div class="abs stt" style="left:-2.5px;color:#a3a6ad">xA</div>
<svg class="abs" style="left:14px;top:648px" width="5" height="6" viewBox="0 0 5 6"><path d="M1 0.6L3.6 3L1 5.4" fill="none" stroke="#8c8f96" stroke-width="0.9"/></svg>
<svg class="abs" style="left:44.8px;top:629px" width="10.2" height="10.7" viewBox="0 0 10.2 10.7"><rect x="3.1" y="3.6" width="7" height="4.3" rx="1.3" fill="#e8b80c"/><rect x="2.9" y="6.4" width="4.3" height="4.3" rx="1.3" fill="#e8b80c"/><rect x="2.9" y="0.7" width="4.1" height="4.3" rx="1.3" fill="#3a9ad6"/><rect x="0" y="3.4" width="6.8" height="3.4" rx="1.2" fill="#3a9ad6"/><rect x="0" y="5.2" width="3.4" height="2.3" rx="1.1" fill="#3a9ad6"/><circle cx="8.25" cy="1.9" r="1.9" fill="#5fb865"/></svg>
<div class="abs stt" style="left:38px;transform:scaleX(0.97)">app.py</div>

<svg class="abs" style="left:636px;top:644px" width="12" height="12" viewBox="0 0 12 12">
<path d="M5.5 0.5L10.3 3.2V8.6L5.5 11.3L0.7 8.6V3.2Z" fill="#a9acb2"/>
<path d="M3.8 3.8L7.2 5.8L3.8 7.8Z" fill="#2b2d30"/>
<circle cx="9" cy="9.2" r="2.2" fill="#e5533e"/>
</svg>
<div class="abs stt" style="left:650.4px">Alt+P 手动补全</div>
<svg class="abs" style="left:718px;top:645px" width="12" height="10" viewBox="0 0 12 10">
<path d="M3 1.3H11M3 1.3V8.6M3 4.9H9.4" fill="none" stroke="#3d9ff0" stroke-width="1.8"/>
<rect x="0" y="4.2" width="1.6" height="1.6" fill="#3d9ff0"/>
</svg>
<div class="abs stt" style="left:739.6px">86:13</div>
<div class="abs stt" style="left:772px;transform:scaleX(0.8)">CRLF</div>
<div class="abs stt" style="left:803px">UTF-8</div>
<svg class="abs" style="left:837px;top:646px" width="12" height="8" viewBox="0 0 12 8">
<path d="M0.8 4L3.4 1.2L6 4L8.6 1.2L11.2 4L8.6 6.8L6 4L3.4 6.8Z" fill="none" stroke="#c9ccd2" stroke-width="1.1"/>
</svg>
<div class="abs stt" style="left:861.5px">4 个空格</div>
<div class="abs stt" style="left:904.4px">Python 3.9 (实训一) (2)</div>
<svg class="abs" style="left:1002.5px;top:646px" width="11" height="10" viewBox="0 0 11 10">
<rect x="0.9" y="3.9" width="6.4" height="5.2" rx="1" fill="none" stroke="#bfc2c8" stroke-width="1"/>
<rect x="3.6" y="5.8" width="1" height="1.4" fill="#bfc2c8"/>
<path d="M5.4 3.9V2.6Q5.4 0.7 7.3 0.7Q9.2 0.7 9.2 2.6V3.1" fill="none" stroke="#bfc2c8" stroke-width="1"/>
</svg>
<div class="abs" style="left:1017.8px;top:641px;width:19px;height:19px;background:#2a406c"></div>
<div class="abs" style="left:1036.7px;top:641px;width:20px;height:19px;background:#212226"></div>
<div class="abs stt" style="left:1020px;top:644px;color:#a9adb5;transform:none;font-size:9.4px">1811/5300M</div>
</body></html>
